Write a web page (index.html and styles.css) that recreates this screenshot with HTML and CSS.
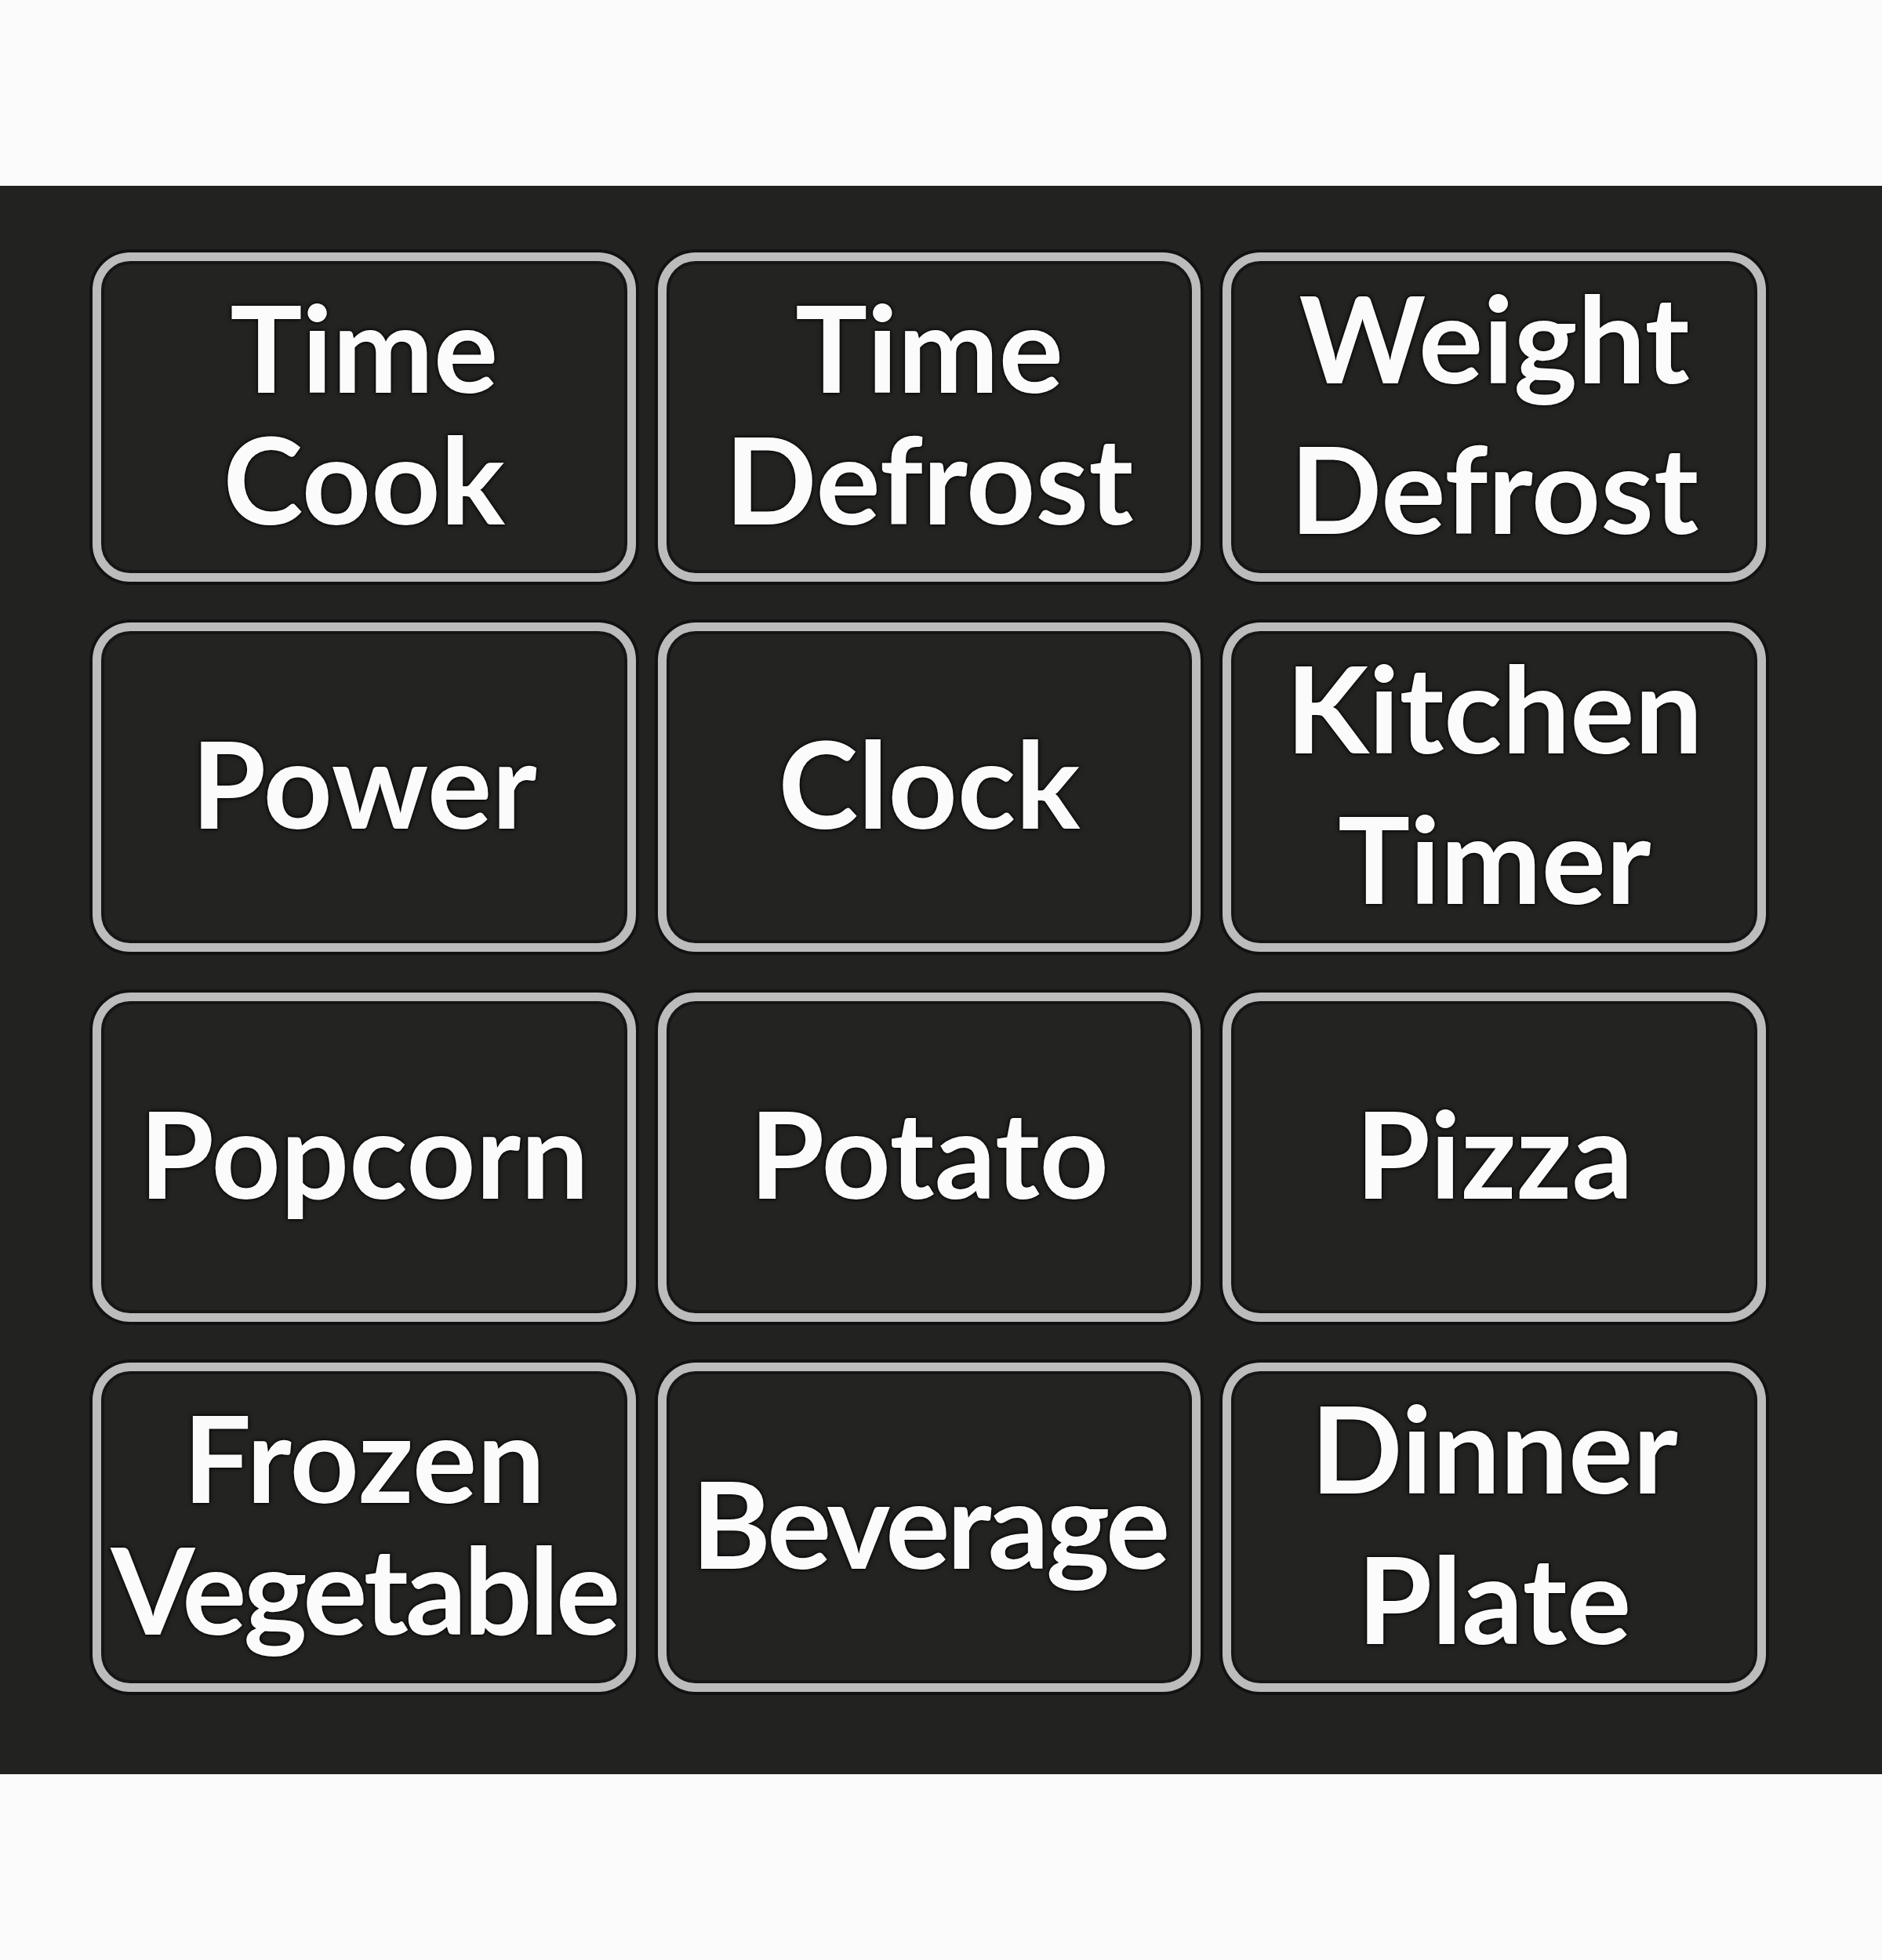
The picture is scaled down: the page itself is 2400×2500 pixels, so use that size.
FILE: index.html
```html
<!DOCTYPE html>
<html lang="en">
<head>
    <meta charset="UTF-8">
    <meta name="viewport" content="width=device-width, initial-scale=1.0">
    <title>Microwave Keypad</title>
    <link rel="stylesheet" href="styles.css">
</head>
<body>
    <div class="panel">
        <div class="keypad">
            <button class="key">Time<br>Cook</button>
            <button class="key">Time<br>Defrost</button>
            <button class="key spaced">Weight<br>Defrost</button>
            <button class="key">Power</button>
            <button class="key">Clock</button>
            <button class="key spaced">Kitchen<br>Timer</button>
            <button class="key">Popcorn</button>
            <button class="key">Potato</button>
            <button class="key">Pizza</button>
            <button class="key">Frozen<br><span class="tight">Vegetable</span></button>
            <button class="key"><span class="tight">Beverage</span></button>
            <button class="key spaced">Dinner<br>Plate</button>
        </div>
    </div>
</body>
</html>
```

FILE: styles.css
```css
body {
    margin: 0;
    padding: 237px 0 0;
    background: #fcfbfc;
    font-family: 'Lato', 'Liberation Sans', sans-serif;
    min-height: 2500px;
    box-sizing: border-box;
}

.panel {
    background: #222220;
    padding: 85px 148px 105px 118px;
}

.keypad {
    display: grid;
    grid-template-columns: repeat(3, minmax(0, 1fr));
    grid-auto-rows: 420px;
    gap: 52px 28px;
}

.key {
    background: #232321;
    color: #fbfbfb;
    border: 11px solid #bcbcbc;
    border-radius: 48px;
    box-shadow: 0 0 0 4px #121212, inset 0 0 0 4px #161616;
    font-family: inherit;
    font-size: 154px;
    font-weight: 700;
    line-height: 168px;
    text-align: center;
    text-shadow: 0 0 6px #000, 0 0 3px #000;
    padding: 0 0 12px;
    white-space: nowrap;
    cursor: pointer;
}

.key.spaced {
    line-height: 192px;
}

.tight {
    letter-spacing: -4px;
}
```
